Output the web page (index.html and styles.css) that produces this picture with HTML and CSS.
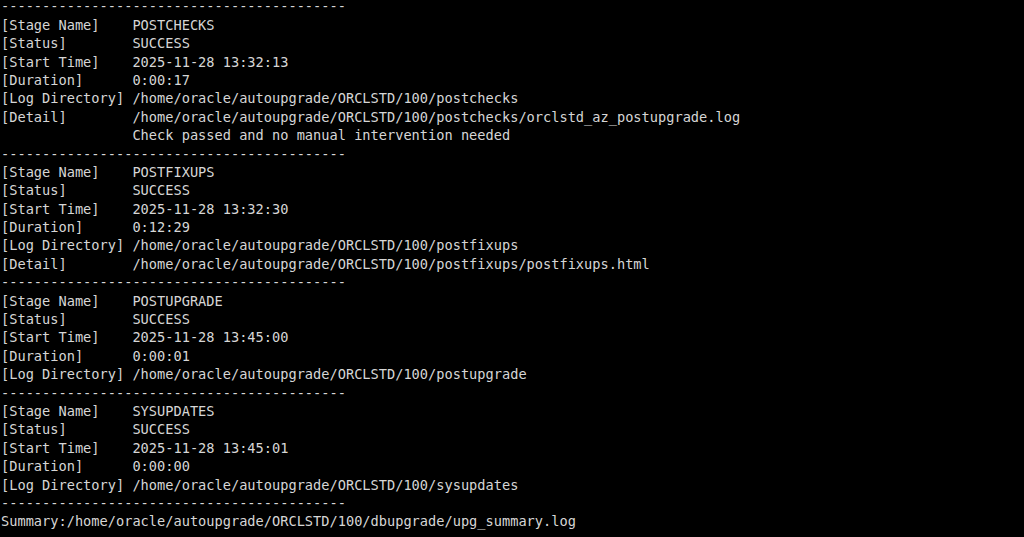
FILE: index.html
```html
<!DOCTYPE html>
<html>
<head>
<meta charset="utf-8">
<link rel="stylesheet" href="styles.css">
</head>
<body>
<div class="term">
  <div class="line lead">------------------------------------------</div>
  <div class="line">[Stage Name]    POSTCHECKS</div>
  <div class="line">[Status]        SUCCESS</div>
  <div class="line">[Start Time]    2025-11-28 13:32:13</div>
  <div class="line">[Duration]      0:00:17</div>
  <div class="line">[Log Directory] /home/oracle/autoupgrade/ORCLSTD/100/postchecks</div>
  <div class="line">[Detail]        /home/oracle/autoupgrade/ORCLSTD/100/postchecks/orclstd_az_postupgrade.log</div>
  <div class="line">                Check passed and no manual intervention needed</div>
  <div class="line">------------------------------------------</div>
  <div class="line">[Stage Name]    POSTFIXUPS</div>
  <div class="line">[Status]        SUCCESS</div>
  <div class="line">[Start Time]    2025-11-28 13:32:30</div>
  <div class="line">[Duration]      0:12:29</div>
  <div class="line">[Log Directory] /home/oracle/autoupgrade/ORCLSTD/100/postfixups</div>
  <div class="line">[Detail]        /home/oracle/autoupgrade/ORCLSTD/100/postfixups/postfixups.html</div>
  <div class="line">------------------------------------------</div>
  <div class="line">[Stage Name]    POSTUPGRADE</div>
  <div class="line">[Status]        SUCCESS</div>
  <div class="line">[Start Time]    2025-11-28 13:45:00</div>
  <div class="line">[Duration]      0:00:01</div>
  <div class="line">[Log Directory] /home/oracle/autoupgrade/ORCLSTD/100/postupgrade</div>
  <div class="line">------------------------------------------</div>
  <div class="line">[Stage Name]    SYSUPDATES</div>
  <div class="line">[Status]        SUCCESS</div>
  <div class="line">[Start Time]    2025-11-28 13:45:01</div>
  <div class="line">[Duration]      0:00:00</div>
  <div class="line">[Log Directory] /home/oracle/autoupgrade/ORCLSTD/100/sysupdates</div>
  <div class="line">------------------------------------------</div>
  <div class="line">Summary:/home/oracle/autoupgrade/ORCLSTD/100/dbupgrade/upg_summary.log</div>
</div>
</body>
</html>
```
FILE: styles.css
```css
html, body {
  margin: 0;
  padding: 0;
  background: #000;
}
body {
  width: 1024px;
  height: 537px;
  overflow: hidden;
}
.term {
  padding: 0 0 0 1px;
  font-family: "DejaVu Sans Mono", "Liberation Mono", monospace;
  font-size: 13.65px;
  line-height: 18.4px;
  color: #d6d6d6;
}
.line {
  white-space: pre;
  height: 18.4px;
}
.line.lead {
  height: 15.8px;
  line-height: 13px;
}
```
